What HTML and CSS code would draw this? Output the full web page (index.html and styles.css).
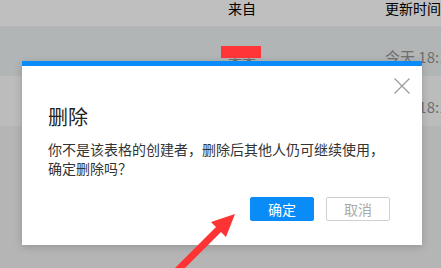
FILE: index.html
```html
<!DOCTYPE html>
<html lang="zh-CN">
<head>
    <meta charset="UTF-8">
    <meta name="viewport" content="width=device-width, initial-scale=1.0">
    <title>删除表格</title>
    <link rel="stylesheet" href="styles.css">
</head>
<body>
    <!-- File list behind the dialog -->
    <div class="file-list">
        <div class="list-head">
            <div class="col-name"></div>
            <div class="col-from">来自</div>
            <div class="col-time">更新时间</div>
        </div>
        <div class="list-row hover">
            <div class="col-name"></div>
            <div class="col-from"><span class="owner">某某<i class="redact"></i></span></div>
            <div class="col-time">今天 18:18</div>
        </div>
        <div class="list-row">
            <div class="col-name"></div>
            <div class="col-from"></div>
            <div class="col-time">今天 18:12</div>
        </div>
    </div>

    <div class="mask"></div>

    <!-- Delete dialog -->
    <div class="dialog">
        <button class="dialog-close" title="关闭">
            <svg width="16" height="16" viewBox="0 0 16 16">
                <path d="M0.5 0.5 L15.5 15.5 M15.5 0.5 L0.5 15.5" stroke="#9a9a9a" stroke-width="1.2" fill="none"/>
            </svg>
        </button>
        <h3 class="dialog-title">删除</h3>
        <p class="dialog-text">你不是该表格的创建者，删除后其他人仍可继续使用，确定删除吗？</p>
        <div class="dialog-buttons">
            <button class="btn btn-primary">确定</button>
            <button class="btn btn-cancel">取消</button>
        </div>
    </div>

    <!-- Annotation arrow -->
    <svg class="arrow" width="441" height="268" viewBox="0 0 441 268">
        <polygon points="235,214 226,237 221,232 173,280 163,280 216,227 211,222" fill="#fe3434"/>
    </svg>
</body>
</html>
```

FILE: styles.css
```css
body {
    margin: 0;
    padding: 0;
    font-family: "Noto Sans CJK SC", "Noto Sans", sans-serif;
    background-color: #f2f2f2;
    width: 441px;
    height: 268px;
    overflow: hidden;
    position: relative;
}
.list-head {
    display: flex;
    height: 26px;
    background-color: #ffffff;
    font-size: 14px;
    line-height: 16px;
    color: #000;
}
.list-row {
    display: flex;
    height: 50px;
    background-color: #fbfbfb;
    font-size: 15px;
    line-height: 20px;
    color: #959595;
    padding-top: 21px;
    box-sizing: border-box;
}
.list-row.hover {
    background-color: #eef2f2;
}
.col-name {
    width: 228px;
    flex-shrink: 0;
}
.col-from {
    width: 157px;
    flex-shrink: 0;
}
.col-time {
    white-space: nowrap;
}
.owner {
    position: relative;
    font-size: 14px;
}
/* redaction box sits above the mask */
.redact {
    position: absolute;
    z-index: 2;
    left: -7px;
    top: -1px;
    width: 40px;
    height: 12px;
    background-color: #ff3538;
}
.mask {
    position: absolute;
    left: 0;
    top: 0;
    right: 0;
    bottom: 0;
    background-color: rgba(0, 0, 0, 0.25);
}
.dialog {
    position: absolute;
    z-index: 3;
    left: 22px;
    top: 61px;
    width: 400px;
    height: 184px;
    box-sizing: border-box;
    background-color: #fff;
    border-top: 5px solid #0a8cf8;
    padding: 37px 32px 0 26px;
    box-shadow: 0 2px 8px rgba(0, 0, 0, 0.18);
}
.dialog-close {
    position: absolute;
    left: 372px;
    top: 12px;
    width: 16px;
    height: 16px;
    padding: 0;
    border: none;
    background: none;
    cursor: pointer;
}
.dialog-close svg {
    display: block;
}
.dialog-title {
    margin: 0;
    font-size: 20px;
    line-height: 28px;
    font-weight: normal;
    color: #222;
}
.dialog-text {
    margin: 9px 0 0 0;
    font-size: 14px;
    line-height: 19px;
    color: #333;
}
.dialog-buttons {
    display: flex;
    justify-content: flex-end;
    gap: 12px;
    margin-top: 19px;
}
.btn {
    width: 64px;
    height: 24px;
    padding: 0;
    font-family: inherit;
    font-size: 14px;
    line-height: 22px;
    border-radius: 2px;
    cursor: pointer;
}
.btn-primary {
    border: 1px solid #0a8cf8;
    background-color: #0a8cf8;
    color: #fff;
}
.btn-cancel {
    border: 1px solid #cfcfcf;
    background-color: #fff;
    color: #aaa;
}
.arrow {
    position: absolute;
    z-index: 4;
    left: 0;
    top: 0;
    pointer-events: none;
}
```
